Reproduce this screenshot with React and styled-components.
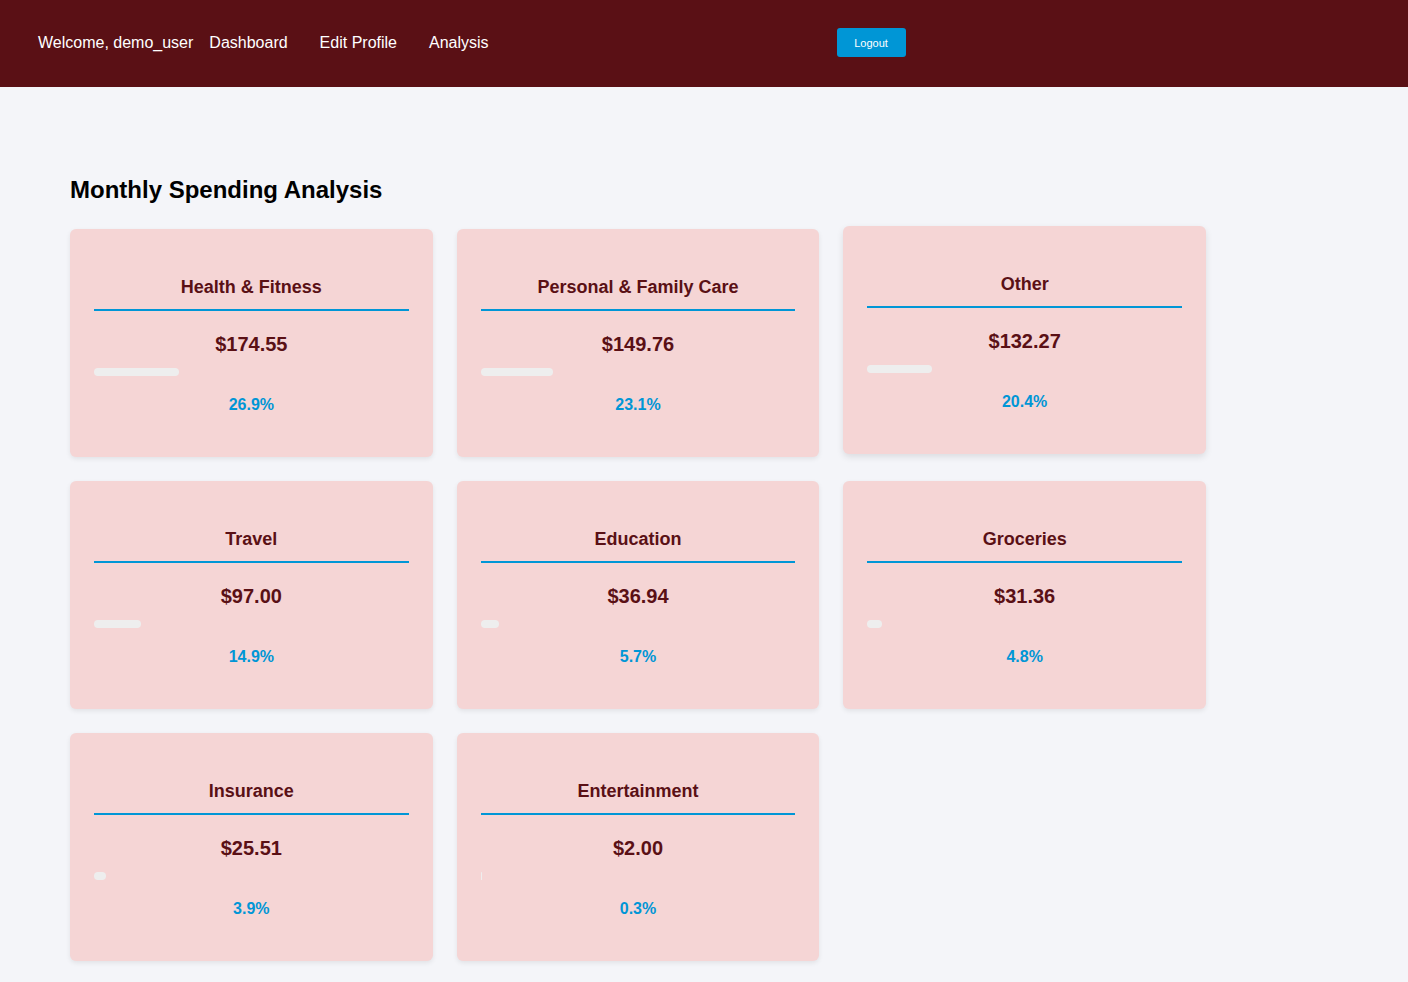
import styled, { createGlobalStyle } from "styled-components";

const GlobalStyle = createGlobalStyle`
  body {
    margin: 0;
    background: #f4f5f9;
    font-family: "Liberation Sans", Arial, Helvetica, sans-serif;
  }
`

const Header = styled.header`
  height: 87px;
  background-color: #5a1015;
  display: flex;
  align-items: center;
  padding: 0 38px 2px;
  box-sizing: border-box;
  color: white;
`
const Welcome = styled.span`
  font-size: 16px;
  margin-right: 16px;
`
const NavLinks = styled.nav`
  display: flex;
  gap: 32px;
`
const NavLink = styled.a`
  color: white;
  font-size: 16px;
  text-decoration: none;
  cursor: pointer;
`
const LogoutBtn = styled.button`
  margin-left: 348px;
  width: 69px;
  height: 29px;
  background-color: #0096d6;
  color: white;
  border: none;
  border-radius: 3px;
  font-family: inherit;
  font-size: 11px;
  cursor: pointer;
`

const Main = styled.main`
  padding: 89px 70px 21px;
`
const PageTitle = styled.h2`
  margin: 0 0 25px;
  font-size: 24px;
  line-height: 28px;
  color: #000;
`
const Grid = styled.div`
  display: grid;
  grid-template-columns: repeat(3, 1fr);
  gap: 24px;
  width: 1136px;
`
const Card = styled.div`
  background-color: #f5d5d5;
  border-radius: 6px;
  padding: 24px;
  box-shadow: ${p => p.$lifted ? "0 3px 7px rgba(0,0,0,0.1)" : "0 2px 5px rgba(0,0,0,0.08)"};
  transform: ${p => p.$lifted ? "translateY(-3px)" : "none"};
  text-align: center;
`
const CategoryName = styled.h3`
  margin: 24px 0 0;
  font-size: 18px;
  line-height: 21px;
  color: #5a1015;
  padding-bottom: 11px;
  border-bottom: 2px solid #0096d6;
`
const Amount = styled.div`
  margin-top: 22px;
  font-size: 20px;
  line-height: 23px;
  font-weight: bold;
  color: #5a1015;
`
const BarTrack = styled.div`
  margin-top: 12px;
  height: 8px;
`
const Bar = styled.div`
  height: 8px;
  background-color: #eeeeee;
  border-radius: 4px;
`
const Percent = styled.div`
  margin: 20px 0 19px;
  font-size: 16px;
  line-height: 18px;
  font-weight: bold;
  color: #0096d6;
`

const spending = [
  { name: "Health & Fitness", amount: 174.55, pct: 26.9 },
  { name: "Personal & Family Care", amount: 149.76, pct: 23.1 },
  { name: "Other", amount: 132.27, pct: 20.4, lifted: true },
  { name: "Travel", amount: 97.0, pct: 14.9 },
  { name: "Education", amount: 36.94, pct: 5.7 },
  { name: "Groceries", amount: 31.36, pct: 4.8 },
  { name: "Insurance", amount: 25.51, pct: 3.9 },
  { name: "Entertainment", amount: 2.0, pct: 0.3 },
]

const App = () => {
  return <>
    <GlobalStyle />
    <Header>
      <Welcome>Welcome, demo_user</Welcome>
      <NavLinks>
        <NavLink>Dashboard</NavLink>
        <NavLink>Edit Profile</NavLink>
        <NavLink>Analysis</NavLink>
      </NavLinks>
      <LogoutBtn>Logout</LogoutBtn>
    </Header>
    <Main>
      <PageTitle>Monthly Spending Analysis</PageTitle>
      <Grid>
        {spending.map(item => (
          <Card key={item.name} $lifted={item.lifted}>
            <CategoryName>{item.name}</CategoryName>
            <Amount>${item.amount.toFixed(2)}</Amount>
            <BarTrack>
              <Bar style={{ width: `${item.pct}%` }} />
            </BarTrack>
            <Percent>{item.pct.toFixed(1)}%</Percent>
          </Card>
        ))}
      </Grid>
    </Main>
  </>
}

export default App
